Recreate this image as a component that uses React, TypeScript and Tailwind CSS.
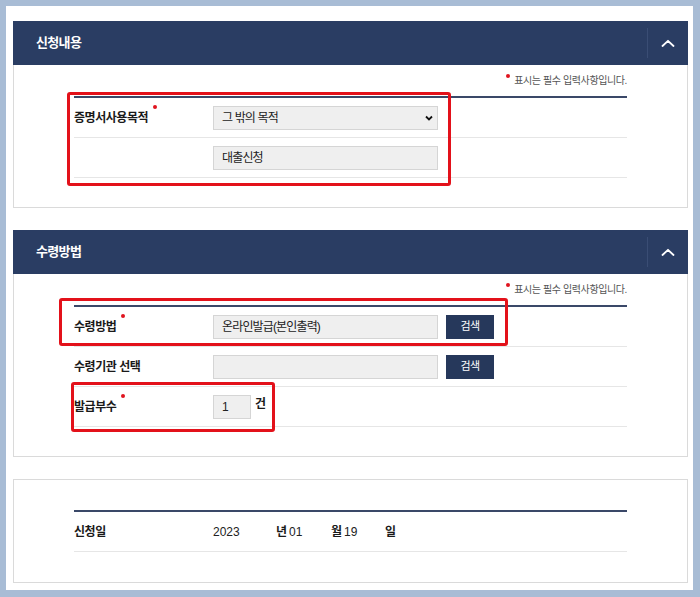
import type { ReactNode } from "react";

function Req({ raise = "mb-[22px]" }: { raise?: string }) {
  return <span className={`ml-[5px] inline-block h-[4px] w-[4px] shrink-0 rounded-full bg-[#e0141e] ${raise}`} />;
}

function Chevron() {
  return (
    <svg width="14" height="8" viewBox="0 0 14 8" fill="none">
      <polyline points="1.5,7 7,1.8 12.5,7" stroke="#fff" strokeWidth="1.8" strokeLinecap="round" strokeLinejoin="round" />
    </svg>
  );
}

function Header({ title }: { title: string }) {
  return (
    <div className="flex h-[44px] items-center bg-[#2a3d63] pl-[23px]">
      <h2 className="flex-1 text-[13px] font-bold tracking-[-0.65px] text-white">{title}</h2>
      <div className="flex h-[30px] w-[41px] items-center justify-center border-l border-[#3a4d74]">
        <Chevron />
      </div>
    </div>
  );
}

function Note() {
  return (
    <p className="flex h-4 items-center justify-end text-[10px] tracking-[-0.4px] text-[#555]">
      <span className="mb-[8px] mr-[4px] inline-block h-[4px] w-[4px] rounded-full bg-[#e0141e]" />
      표시는 필수 입력사항입니다.
    </p>
  );
}

function Row({ label, req, children }: { label?: string; req?: boolean; children: ReactNode }) {
  return (
    <div className="flex h-[40px] items-center border-b border-[#e6e6e6]">
      <div className="flex w-[139px] items-center text-[12px] font-bold tracking-[-0.45px] text-[#1a1a1a]">
        {label}
        {req ? <Req /> : null}
      </div>
      {children}
    </div>
  );
}

function Field({ children, w = "w-[225px]" }: { children?: ReactNode; w?: string }) {
  return (
    <div className={`flex h-[24px] ${w} items-center border border-[#d5d5d5] bg-[#efefef] pl-[8px] text-[12px] tracking-[-0.85px] text-[#222]`}>
      {children}
    </div>
  );
}

function SearchBtn() {
  return (
    <div className="ml-[8px] flex h-[24px] w-[48px] items-center justify-center bg-[#26385b] text-[11px] tracking-[-0.5px] text-white">
      검색
    </div>
  );
}

export default function App() {
  return (
    <div className="relative h-[597px] w-[700px] bg-[#a8bcd5] pb-[7px] pl-[6px] pr-[7px] pt-[6px] font-['Liberation_Sans','Noto_Sans_CJK_KR',sans-serif]">
      <div className="h-full bg-white pl-[7px] pr-[5px] pt-[15px]">
        <section>
          <Header title="신청내용" />
          <div className="border-x border-b border-[#dadada] px-[60px] pb-[29px] pt-[7px]">
            <Note />
            <div className="mt-2 border-t-2 border-[#3a4868]">
              <Row label="증명서사용목적" req>
                <Field>
                  <span className="flex-1">그 밖의 목적</span>
                  <svg width="8" height="6" viewBox="0 0 8 6" className="mr-[4px]">
                    <polyline points="1,1.5 4,4.5 7,1.5" fill="none" stroke="#111" strokeWidth="1.8" />
                  </svg>
                </Field>
              </Row>
              <Row>
                <Field>대출신청</Field>
              </Row>
            </div>
          </div>
        </section>

        <section className="mt-[22px]">
          <Header title="수령방법" />
          <div className="border-x border-b border-[#dadada] px-[60px] pb-[29px] pt-[7px]">
            <Note />
            <div className="mt-2 border-t-2 border-[#3a4868]">
              <Row label="수령방법" req>
                <Field>온라인발급(본인출력)</Field>
                <SearchBtn />
              </Row>
              <Row label="수령기관 선택">
                <Field />
                <SearchBtn />
              </Row>
              <Row label="발급부수" req>
                <Field w="w-[38px]">1</Field>
                <span className="mb-[6px] ml-[4px] text-[12px] font-bold text-[#1a1a1a]">건</span>
              </Row>
            </div>
          </div>
        </section>

        <section className="mt-[22px] border border-[#dadada] px-[60px] pb-[30px] pt-[30px]">
          <div className="border-t-2 border-[#3a4868]">
            <div className="flex h-[40px] items-center border-b border-[#e6e6e6] text-[12px] text-[#222]">
              <div className="w-[139px] font-bold tracking-[-0.45px] text-[#1a1a1a]">신청일</div>
              <div className="w-[63px]">2023</div>
              <div className="flex w-[55px] items-center">
                <b className="text-[#1a1a1a]">년</b>
                <span className="ml-[2px]">01</span>
              </div>
              <div className="flex w-[54px] items-center">
                <b className="text-[#1a1a1a]">월</b>
                <span className="ml-[2px]">19</span>
              </div>
              <b className="text-[#1a1a1a]">일</b>
            </div>
          </div>
        </section>
      </div>

      <div className="absolute left-[67px] top-[92px] h-[94px] w-[384px] rounded-[3px] border-[3px] border-[#e3111a]" />
      <div className="absolute left-[59px] top-[298px] h-[48px] w-[449px] rounded-[3px] border-[3px] border-[#e3111a]" />
      <div className="absolute left-[71px] top-[382px] h-[50px] w-[204px] rounded-[3px] border-[3px] border-[#e3111a]" />
    </div>
  );
}
